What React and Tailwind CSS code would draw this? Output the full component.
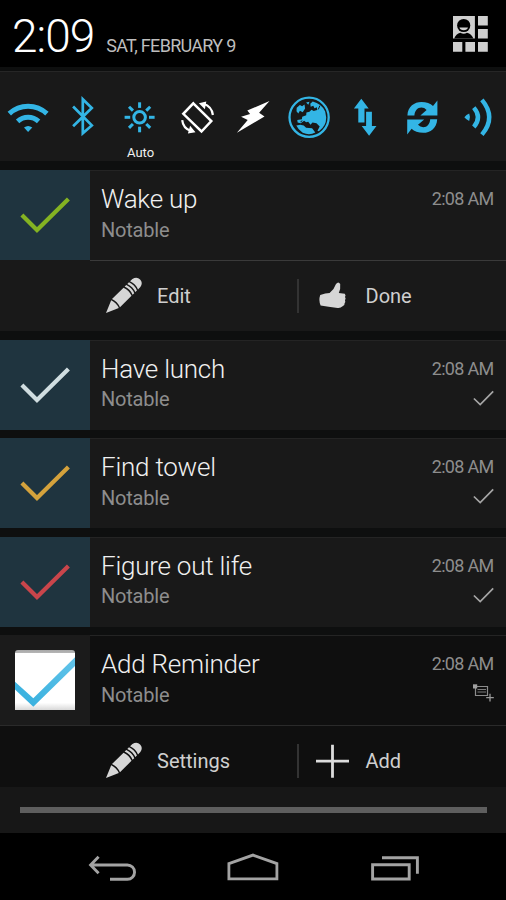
import React from "react";

const BLUE = "#33b5e5";

function Tile({ x, label, children }) {
  return (
    <div className="flex min-w-0 flex-col items-center">
      <svg className="h-[73px] w-full shrink-0" viewBox={`${x} 72 56.22 73`}>
        {children}
      </svg>
      {label && <span className="text-[13px] leading-4 text-[#f0f0f0]">{label}</span>}
    </div>
  );
}

function Toggles() {
  const rays = [0, 45, 90, 135, 180, 225, 270, 315];
  const syncHalf =
    "M407 115.6C407.4 106.4 414 102 421 102C426 102 430 103.6 432.6 106L437 100.4V115.4H420L426.2 110Q424 107.6 421 107.6C417 107.6 414.3 111 414 115.6Z";
  return (
    <div className="grid h-[90px] shrink-0 grid-cols-9 border-t border-[#262626] bg-[#191919]">
      <Tile x={0}>
        <g fill="none" stroke={BLUE} strokeWidth="5">
          <path d="M9.3 113.6A27.5 27.5 0 0 1 46.9 113.6" />
          <path d="M17.6 121.4A15.6 15.6 0 0 1 38.6 121.4" />
        </g>
        <path d="M24 127.6Q28.1 124.6 32.3 127.6L28.1 132Z" fill={BLUE} />
      </Tile>
      <Tile x={56.2}>
        <path d="M73.3 106.5L92 125.4L83 133.2V99.2L92 108L73.3 126.3" fill="none" stroke={BLUE} strokeWidth="2.7" />
      </Tile>
      <Tile x={112.4} label="Auto">
        <g fill="none" stroke={BLUE} strokeWidth="3">
          <circle cx="140" cy="117.3" r="5.8" />
          {rays.map((a) => (
            <path key={a} d="M149.4 117.3H155" transform={`rotate(${a} 140 117.3)`} />
          ))}
        </g>
      </Tile>
      <Tile x={168.7}>
        <path d="M193 103.3L211 121L201.2 131.5L183 113.8Z" fill="none" stroke="#fff" strokeWidth="2.5" />
        <g fill="none" stroke="#fff" strokeWidth="2.2">
          <path d="M203 103.8Q211.6 106.5 212.6 115" />
          <path d="M181.9 120.2Q182.8 128.6 190.6 131" />
        </g>
        <path d="M198.6 103.2L206 101.6L204.6 109.2ZM195.2 132.2L187.6 133.5L189.8 125.8Z" fill="#fff" />
      </Tile>
      <Tile x={224.9}>
        <path d="M269.4 101L247.2 110.6L250 114L241 116.8L247.6 120L236.8 132.8L264.4 116.4L259 112.8Z" fill="#fff" />
      </Tile>
      <Tile x={281.1}>
        <circle cx="309.2" cy="117.3" r="19.6" fill="none" stroke={BLUE} strokeWidth="2.3" />
        <g fill={BLUE}>
          <path d="M302.3 116.8L306.3 115.2L306.5 112.6L309.6 111.8L311.6 109.8L313.8 111L317.3 109.9L317 107.3L314.6 108.3L313.4 105.8L310.8 106.7L310.4 103.7L312.8 101.6Q321.5 103.8 325.3 111.4L326.3 117.6Q326.4 126.2 319 131.3L317.6 130.8L319.8 126.6L316.6 123.2L312.6 122.6L310.6 124.8L308.3 121.8L306.2 122.3L304.2 120.8L300.8 123.3L297.7 122.6L297.4 120L302 119.2Z" />
          <path d="M296.8 107.8L300 105L302.2 106.3L304.6 104.4L305.2 108.5L302.8 112.2L300 110.8L298.4 113.4L296.6 111.2ZM306.2 102.4L309.6 101.8L308.4 104.8Z" />
          <path d="M296.4 125.6L300.4 124.8L303.8 125.4L306.2 127.8L312.2 128.3L315.4 132.4Q309.6 135.8 302.8 132.7Q298.4 130 296.4 125.6Z" />
        </g>
        <path d="M320 105.6L318.4 109.4M300.6 121.8L302.4 120.8" fill="none" stroke="#191919" />
      </Tile>
      <Tile x={337.3}>
        <path d="M361.6 98.8L369 108.4H364.8V122.6H358.6V108.4H354.2Z" fill={BLUE} />
        <path d="M366.4 111.8H372.2V126H376.8L369.4 135.8L362 126H366.4Z" fill={BLUE} />
      </Tile>
      <Tile x={393.6}>
        <g fill={BLUE}>
          <path d={syncHalf} />
          <path d={syncHalf} transform="rotate(180 421.9 117.4)" />
        </g>
      </Tile>
      <Tile x={449.8}>
        <path d="M464.2 117.2Q466 114.6 469 113.4Q470.6 117.2 469 121Q466 119.8 464.2 117.2Z" fill={BLUE} />
        <g fill="none" stroke={BLUE} strokeWidth="4.4">
          <path d="M473.6 107.6Q482 117.3 473.6 127" />
          <path d="M481.7 99.8Q496.4 117.3 481.7 134.6" />
        </g>
      </Tile>
    </div>
  );
}

function BigCheck({ color }) {
  return (
    <div className="h-[90px] w-[90px] shrink-0 bg-[#1f343f]">
      <svg className="h-[90px] w-[90px]" viewBox="0 0 90 90">
        <path d="M21.9 45L37 60L68.4 29" fill="none" stroke={color} strokeWidth="4.2" />
      </svg>
    </div>
  );
}

function AppIcon() {
  return (
    <div className="h-[90px] w-[90px] shrink-0 bg-[#1b1b1b]">
      <svg className="h-[90px] w-[90px]" viewBox="0 635 90 90">
        <defs>
          <linearGradient id="paper" x1="0" y1="0" x2="0" y2="1">
            <stop offset="0" stopColor="#a8a8a8" />
            <stop offset="0.045" stopColor="#b4b4b4" />
            <stop offset="0.055" stopColor="#fff" />
            <stop offset="0.88" stopColor="#fff" />
            <stop offset="1" stopColor="#d8d8d8" />
          </linearGradient>
          <linearGradient id="tick" x1="0" y1="1" x2="1" y2="0">
            <stop offset="0" stopColor="#33aedd" />
            <stop offset="1" stopColor="#62c4ea" />
          </linearGradient>
        </defs>
        <path d="M15 653Q15 650 18 650H72Q75 650 75 653V710H15Z" fill="url(#paper)" />
        <path d="M15 681.7L33.3 698.3L75 657.3V665.9L33.3 706.7L15 689.6Z" fill="url(#tick)" />
      </svg>
    </div>
  );
}

function SmallCheck() {
  return (
    <svg className="mt-[9px] h-4 w-[22px]" viewBox="472 389.5 22 16">
      <path d="M473.9 398L480.2 404L493.2 390.9" fill="none" stroke="#a6a6a6" strokeWidth="1.7" />
    </svg>
  );
}

function NoteAdd() {
  return (
    <svg className="mt-2 h-[18px] w-[22px]" viewBox="472 684 22 18">
      <path d="M476 686.5H487.5V695.5H475.5V688" fill="none" stroke="#8c8c8c" strokeWidth="1.2" />
      <path d="M473 684.3H477.2V688.5H473Z" fill="#a0a0a0" />
      <path d="M477.5 689.5H486M477.5 692H486" stroke="#7c7c7c" />
      <path d="M486.2 697.6H493.8M490 693.8V701.6" stroke="#999" strokeWidth="1.3" />
    </svg>
  );
}

function Entry({ title, icon, extra, dark }) {
  return (
    <div className={`flex h-[90px] shrink-0 ${dark ? "bg-[#0f0f0f]" : "bg-[#191919]"}`}>
      {icon}
      <div className="flex flex-1 justify-between border-t border-[#242424] pr-3 pl-[11px]">
        <div className="flex flex-col pt-3">
          <span className="text-[26px] leading-8 font-light tracking-[-0.23px] whitespace-nowrap text-[#f0f0f0]">{title}</span>
          <span className="mt-[2.5px] text-[20px] leading-6 tracking-[-0.2px] text-[#8d8d8d]">Notable</span>
        </div>
        <div className="flex flex-col items-end pt-4">
          <span className="-mr-px pr-[1.5px] text-[18px] leading-6 tracking-[-0.7px] whitespace-nowrap text-[#8d8d8d]">2:08 AM</span>
          {extra}
        </div>
      </div>
    </div>
  );
}

function Pencil() {
  return (
    <svg className="h-10 w-10 shrink-0" viewBox="104 275.5 40 40">
      <g transform="translate(106 312.4) rotate(-44.5)" fill="#d6d6d6">
        <path d="M0 0L12.6 -5.4Q14.6 0 12.6 5.4Z" />
        <path d="M14 -5.7H30.2Q32.4 0 30.2 5.7H14Q16 0 14 -5.7Z" />
        <path d="M31.7 -5.7H34Q36.2 0 34 5.7H31.7Q33.9 0 31.7 -5.7Z" />
        <path d="M35.5 -5.7H37.8Q40 0 37.8 5.7H35.5Q37.7 0 35.5 -5.7Z" />
        <path d="M39.3 -5.7H42.6Q47.8 -4.6 47.8 0Q47.8 4.6 42.6 5.7H39.3Q41.5 0 39.3 -5.7Z" />
      </g>
    </svg>
  );
}

function Thumb() {
  return (
    <svg className="h-9 w-9 shrink-0" viewBox="315 277.5 36 36">
      <path
        d="M320.2 294.6Q325.6 292.8 329.6 292.6Q334.2 288.8 336 283.4Q338.4 280.4 340.2 283.4Q340.8 288.4 338.8 292.4L344.8 293.2Q346.2 295 345 296.6Q346.2 298.2 345 299.8Q345.8 301.6 344.6 302.8Q345 305 342.6 305.8Q340.4 307.8 337.6 307.4L328.6 306.2L320.6 305Q318.4 300 320.2 294.6Z"
        fill="#d6d6d6"
      />
    </svg>
  );
}

function Plus() {
  return (
    <svg className="h-9 w-9 shrink-0" viewBox="315 741 36 36">
      <path d="M316 759.2H349M332.5 742.8V775.8" stroke="#dcdcdc" strokeWidth="2.8" />
    </svg>
  );
}

function Actions({ first, second, secondIcon }) {
  return (
    <div className="flex h-[70px] shrink-0 items-center pb-px pl-[90px] text-[20px] leading-6 text-[#cfcfcf]">
      <div className="flex w-[207px] items-center gap-[13px] pl-[14px]">
        <Pencil />
        <span>{first}</span>
      </div>
      <div className="h-[34px] w-[1.5px] bg-[#333]" />
      <div className="flex items-center gap-[15px] pl-4">
        {secondIcon}
        <span>{second}</span>
      </div>
    </div>
  );
}

function ProfileGrid() {
  return (
    <svg className="h-9 w-9" viewBox="453 16 36 36">
      <path
        d="M452.7 16H474.9V38.5H452.7ZM478 16H487.8V25.6H478ZM478 29H487.8V38.5H478ZM452.7 42H462.3V51.7H452.7ZM465.4 42H475V51.7H465.4ZM478 42H487.8V51.7H478Z"
        fill="#cfcfcf"
      />
      <circle cx="463.7" cy="25.5" r="6.6" fill="#000" />
      <path d="M459.4 27.6H468Q467.2 30.3 463.7 30.3Q460.2 30.3 459.4 27.6Z" fill="#cfcfcf" />
      <path d="M454.2 38.6Q455.8 34 460.4 32.8Q463.7 34.8 467 32.8Q471.6 34 473.4 38.6Z" fill="#000" />
    </svg>
  );
}

function NavBar() {
  return (
    <div className="flex h-[67px] shrink-0 items-start justify-between bg-black px-[85px] pt-[17px]">
      <svg className="h-9 w-14" viewBox="85 850 56 36">
        <path d="M98.6 856.8L90.6 865L98.6 873.2M91 865H127.4A7 7 0 0 1 127.4 879.3H110" fill="none" stroke="#a3a3a3" strokeWidth="2.9" />
      </svg>
      <svg className="h-9 w-14" viewBox="225 850 56 36">
        <path d="M228.9 863.6L253 855.1L276.9 863.6V878.9H228.9Z" fill="none" stroke="#a3a3a3" strokeWidth="2.8" />
      </svg>
      <svg className="h-9 w-14" viewBox="365 850 56 36">
        <path d="M372.6 864.8H409.2V879H372.6ZM382 857.8H417.4V873.8" fill="none" stroke="#a3a3a3" strokeWidth="2.9" />
      </svg>
    </div>
  );
}

export default function App() {
  return (
    <div className="flex h-[900px] w-[506px] flex-col overflow-hidden bg-[#0e0f0f] font-[Roboto,sans-serif]">
      <header className="mb-1 flex h-[67px] shrink-0 items-start justify-between bg-black pr-[17px] pl-3">
        <div className="flex items-baseline pt-[9px]">
          <span className="text-[46px] leading-[54px] font-light tracking-[-1px] text-white">2:09</span>
          <span className="ml-3 text-[18px] tracking-[-0.7px] whitespace-nowrap text-[#bdbdbd]">SAT, FEBRUARY 9</span>
        </div>
        <div className="pt-4">
          <ProfileGrid />
        </div>
      </header>
      <Toggles />
      <main className="flex h-[626px] shrink-0 flex-col gap-[8.5px] overflow-hidden pt-[9px]">
        <section className="flex shrink-0 flex-col bg-[#191919]">
          <Entry title="Wake up" icon={<BigCheck color="#84b322" />} />
          <div className="ml-[90px] h-px bg-[#3a3a3a]" />
          <Actions first="Edit" second="Done" secondIcon={<Thumb />} />
        </section>
        <Entry title="Have lunch" icon={<BigCheck color="#d0dde0" />} extra={<SmallCheck />} />
        <Entry title="Find towel" icon={<BigCheck color="#d4a23c" />} extra={<SmallCheck />} />
        <Entry title="Figure out life" icon={<BigCheck color="#c9454b" />} extra={<SmallCheck />} />
        <section className="flex shrink-0 flex-col bg-[#0f0f0f]">
          <Entry dark title="Add Reminder" icon={<AppIcon />} extra={<NoteAdd />} />
          <div className="h-px bg-[#2a2a2a]" />
          <Actions first="Settings" second="Add" secondIcon={<Plus />} />
        </section>
      </main>
      <footer className="flex h-[46px] shrink-0 items-center bg-[#171717] px-[19.5px]">
        <div className="h-[6px] w-full bg-[#5e5e5e]" />
      </footer>
      <NavBar />
    </div>
  );
}
